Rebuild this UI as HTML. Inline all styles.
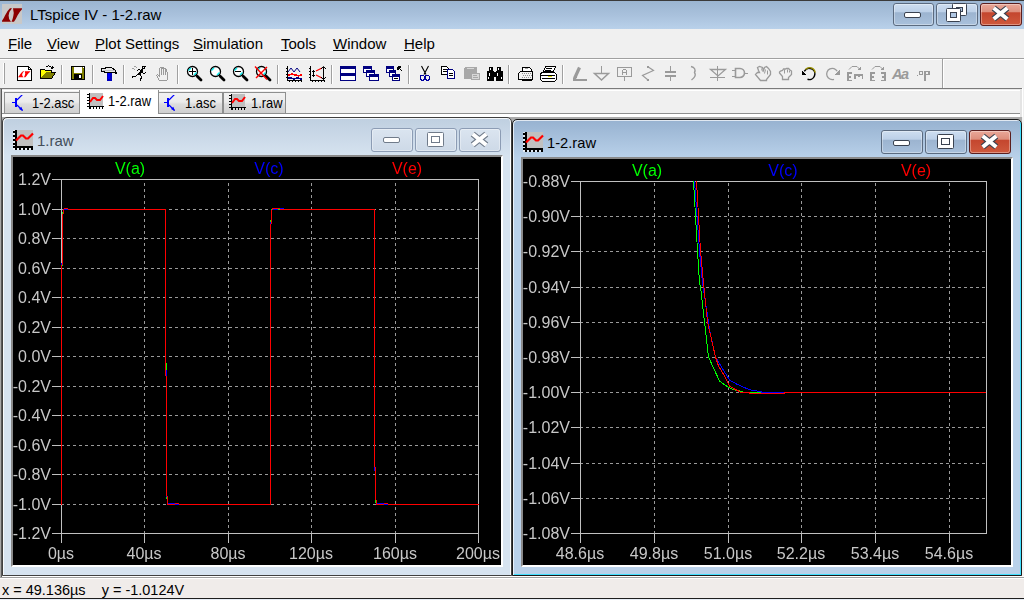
<!DOCTYPE html>
<html><head><meta charset="utf-8">
<style>
*{margin:0;padding:0;box-sizing:border-box}
html,body{width:1024px;height:600px;overflow:hidden;background:#f0f0f0;font-family:"Liberation Sans",sans-serif;position:relative}
.abs{position:absolute}
#title{left:0;top:0;width:1024px;height:29px;background:linear-gradient(#9bb5d1,#a9c1dc 50%,#b9d1ea);border-top:1px solid #3a3a3a}
#title .t{left:30px;top:5px;font-size:15px;color:#000;white-space:nowrap}
#menu{left:0;top:29px;width:1024px;height:29px;background:#f0f0f0}
#menu span{position:absolute;top:6px;font-size:15px;color:#000;white-space:nowrap}
#menu u{text-decoration:underline;text-decoration-thickness:1px;text-underline-offset:1px}
#tabs{left:0;top:90px;width:1024px;height:27px;background:#f0f0f0}
.tab{position:absolute;top:2px;height:22px;border:1px solid #8e8f8f;background:linear-gradient(#f3f3f3,#ebebeb 45%,#dcdcdc 55%,#cfcfcf);font-size:15px;white-space:nowrap}
.tab.sel{top:-1px;height:25px;background:#fff;border:none}
.tt{font-size:15px;white-space:nowrap;transform:scaleX(0.86);transform-origin:0 0}
.xx{position:absolute;top:2px;transform:scaleX(0.86);transform-origin:0 0}
#mdi{left:0;top:117px;width:1024px;height:460px;background:#ababab;border-left:1px solid #a8a8a8;box-shadow:inset 1px 0 0 #5a5a5a, inset 0 -1px 0 #fff, inset -2px 0 0 #f4f4f4}
#status{left:0;top:577px;width:1024px;height:23px;background:#f0ecea;border-top:1px solid #a0a0a0;box-shadow:inset 0 1px 0 #fff;border-bottom:1px solid #e8eef6}
#status:after{content:"";position:absolute;left:0;top:20px;width:1024px;height:1px;background:#1e1e1e}
#status .t{left:2px;top:3px;font-size:15px;white-space:nowrap;transform:scaleX(0.965);transform-origin:0 0}
.win{border:1px solid #404040;border-radius:5px 5px 0 0}
.win.l{background:linear-gradient(#bfcfe0 0,#d6e3f0 38px,#d6e3f0);box-shadow:inset 1px 1px 0 rgba(255,255,255,0.8),inset -1px 0 0 rgba(255,255,255,0.9)}
.win.r{background:linear-gradient(#97b2d0 0,#b9d1ea 38px,#b9d1ea);border-color:#1a1a1a;box-shadow:inset 1px 1px 0 rgba(255,255,255,0.7),inset -1px -1px 0 #40e0ff}
.pb{border-top:2px solid #8a8a8a;border-left:2px solid #8a8a8a;border-right:2px solid #fff;border-bottom:2px solid #fff}
.ct{font-size:15px;white-space:nowrap}
svg text{font-family:"Liberation Sans",sans-serif}
</style></head><body>
<div id="title" class="abs">
  <div class="abs" style="left:2px;top:3px;width:20px;height:20px;background:#c8c8c8"></div>
  <svg class="abs" style="left:0;top:0" width="26" height="26"><path d="M10 7.3H12Q9 10.5 8.6 14.5Q8.4 18 11 20.7H2V19.8Q3.8 17.5 5 14.5Q7 10 10 7.3Z M13 7.3H22V8.3Q19.5 11 17.5 14.5Q16 18 14 20.7H11.5Q12.8 18 13.3 15Q14.2 11.5 13.3 9.2Z" fill="#8b0000"/></svg>
  <div class="t abs">LTspice IV - 1-2.raw</div>
</div>
<svg class="abs" style="left:880px;top:0" width="144" height="30" viewBox="880 0 144 30"><defs>
<linearGradient id="gAct" x1="0" y1="0" x2="0" y2="1"><stop offset="0" stop-color="#cfdff1"/><stop offset="0.38" stop-color="#bcd0e8"/><stop offset="0.42" stop-color="#9cb4d0"/><stop offset="1" stop-color="#a9c1dc"/></linearGradient>
<linearGradient id="gClose" x1="0" y1="0" x2="0" y2="1"><stop offset="0" stop-color="#eaa99a"/><stop offset="0.38" stop-color="#dd8e7c"/><stop offset="0.42" stop-color="#c4462e"/><stop offset="1" stop-color="#cf5a3e"/></linearGradient>
<linearGradient id="gInact" x1="0" y1="0" x2="0" y2="1"><stop offset="0" stop-color="#dbe5f0"/><stop offset="1" stop-color="#cdd9e7"/></linearGradient>
</defs>
<rect x="893.5" y="3.5" width="40" height="22" rx="2.5" fill="url(#gAct)" stroke="#5b6b80"/><rect x="894.5" y="4.5" width="38" height="20" rx="2" fill="none" stroke="rgba(255,255,255,0.35)"/>
<rect x="904.5" y="12.5" width="16" height="5" rx="1.5" fill="#fff" stroke="#3a4250" stroke-width="1"/>
<rect x="936.5" y="3.5" width="41" height="22" rx="2.5" fill="url(#gAct)" stroke="#5b6b80"/><rect x="937.5" y="4.5" width="39" height="20" rx="2" fill="none" stroke="rgba(255,255,255,0.35)"/>
<rect x="952.5" y="3.5" width="14" height="12" rx="1" fill="#fff" stroke="#3a4250"/><rect x="956.5" y="7.5" width="6" height="4" fill="#b0c8e4" stroke="#3a4250"/><rect x="946.5" y="8.5" width="14" height="13" rx="1" fill="#fff" stroke="#3a4250"/><rect x="950.5" y="12.5" width="6" height="5" fill="#b0c8e4" stroke="#3a4250"/>
<rect x="980.5" y="3.5" width="41" height="22" rx="2.5" fill="url(#gClose)" stroke="#5a1e1e"/><rect x="981.5" y="4.5" width="39" height="20" rx="2" fill="none" stroke="rgba(255,255,255,0.35)"/>
<path d="M993.7 8.059999999999999L1007.3 18.94M1007.3 8.059999999999999L993.7 18.94" stroke="#3a4250" stroke-width="6.2" fill="none" stroke-linecap="butt"/><path d="M993.7 8.059999999999999L1007.3 18.94M1007.3 8.059999999999999L993.7 18.94" stroke="#fff" stroke-width="4" fill="none" stroke-linecap="butt"/>
</svg>
<div id="menu" class="abs">
  <span style="left:8px"><u>F</u>ile</span>
  <span style="left:47px"><u>V</u>iew</span>
  <span style="left:95px"><u>P</u>lot Settings</span>
  <span style="left:193px"><u>S</u>imulation</span>
  <span style="left:281px"><u>T</u>ools</span>
  <span style="left:333px"><u>W</u>indow</span>
  <span style="left:404px"><u>H</u>elp</span>
</div>
<svg class="abs" style="left:0;top:58px" width="1024" height="32" viewBox="0 58 1024 32" shape-rendering="crispEdges">
<rect x="0" y="58" width="1024" height="1" fill="#a0a0a0"/>
<rect x="0" y="59" width="1024" height="1" fill="#ffffff"/>
<rect x="0" y="88" width="1024" height="1" fill="#a0a0a0"/>
<rect x="0" y="89" width="1024" height="1" fill="#ffffff"/>
<rect x="942" y="59" width="1" height="29" fill="#a0a0a0"/>
<rect x="943" y="59" width="1" height="29" fill="#ffffff"/>
<rect x="3" y="63" width="1" height="21" fill="#ffffff"/>
<rect x="4" y="63" width="1" height="21" fill="#a0a0a0"/>
<rect x="61" y="65" width="1" height="19" fill="#a0a0a0"/><rect x="62" y="65" width="1" height="19" fill="#ffffff"/>
<rect x="92" y="65" width="1" height="19" fill="#a0a0a0"/><rect x="93" y="65" width="1" height="19" fill="#ffffff"/>
<rect x="123" y="65" width="1" height="19" fill="#a0a0a0"/><rect x="124" y="65" width="1" height="19" fill="#ffffff"/>
<rect x="177" y="65" width="1" height="19" fill="#a0a0a0"/><rect x="178" y="65" width="1" height="19" fill="#ffffff"/>
<rect x="277" y="65" width="1" height="19" fill="#a0a0a0"/><rect x="278" y="65" width="1" height="19" fill="#ffffff"/>
<rect x="331" y="65" width="1" height="19" fill="#a0a0a0"/><rect x="332" y="65" width="1" height="19" fill="#ffffff"/>
<rect x="408" y="65" width="1" height="19" fill="#a0a0a0"/><rect x="409" y="65" width="1" height="19" fill="#ffffff"/>
<rect x="508" y="65" width="1" height="19" fill="#a0a0a0"/><rect x="509" y="65" width="1" height="19" fill="#ffffff"/>
<rect x="562" y="65" width="1" height="19" fill="#a0a0a0"/><rect x="563" y="65" width="1" height="19" fill="#ffffff"/>
<path d="M17.5 66.5H28.5L31.5 69.5V80.5H17.5Z" fill="#fff" stroke="#000" stroke-width="1"/>
<path d="M28.5 66.5V69.5H31.5" fill="none" stroke="#000" stroke-width="1"/>
<path transform="translate(17,68) scale(0.6,0.45)" d="M10 7.3H12Q9 10.5 8.6 14.5Q8.4 18 11 20.7H2V19.8Q3.8 17.5 5 14.5Q7 10 10 7.3Z M13 7.3H22V8.3Q19.5 11 17.5 14.5Q16 18 14 20.7H11.5Q12.8 18 13.3 15Q14.2 11.5 13.3 9.2Z" fill="#ff0000" shape-rendering="auto"/>
<path d="M40.5 69.5H44.5L45.5 70.5H51.5V72.5H55.5L51.5 78.5H40.5Z" fill="#808000" stroke="#000" stroke-width="1"/>
<path d="M41 70H44L45 71H51V72H46L41 78Z" fill="#ffff00"/>
<path d="M46 66.5Q49 65 52 67.5" fill="None" stroke="#000" stroke-width="1"/>
<path d="M52 66L54 68L51 69Z" fill="#000"/>
<rect x="71" y="66" width="14" height="14" fill="#000"/>
<rect x="72" y="67" width="12" height="12" fill="#808000"/>
<rect x="74" y="67" width="8" height="6" fill="#fff"/>
<rect x="73" y="73" width="10" height="1" fill="#808000"/>
<rect x="74" y="74" width="8" height="5" fill="#000"/>
<rect x="79" y="75" width="2" height="3" fill="#fff"/>
<rect x="83" y="67" width="1" height="1" fill="#fff"/>
<path d="M101.5 68.5H104.5L106.5 67.5H111.5L115.5 70.5L116.5 73.5L114.5 72.5H105.5L103.5 71.5H101.5Z" fill="#e8e8e8" stroke="#000" stroke-width="1"/>
<rect x="103" y="70" width="12" height="1" fill="#c0c0c0"/>
<rect x="107" y="73" width="5" height="8" fill="#0000c0"/>
<rect x="108" y="73" width="2" height="6" fill="#0000ff"/>
<rect x="142" y="66" width="1" height="1" fill="#000"/>
<rect x="143" y="66" width="1" height="1" fill="#000"/>
<rect x="144" y="66" width="1" height="1" fill="#000"/>
<rect x="145" y="66" width="1" height="1" fill="#000"/>
<rect x="142" y="67" width="1" height="1" fill="#000"/>
<rect x="144" y="67" width="1" height="1" fill="#000"/>
<rect x="142" y="68" width="1" height="1" fill="#000"/>
<rect x="143" y="68" width="1" height="1" fill="#000"/>
<rect x="144" y="68" width="1" height="1" fill="#000"/>
<rect x="138" y="69" width="1" height="1" fill="#000"/>
<rect x="139" y="69" width="1" height="1" fill="#000"/>
<rect x="141" y="69" width="1" height="1" fill="#000"/>
<rect x="142" y="69" width="1" height="1" fill="#000"/>
<rect x="137" y="70" width="1" height="1" fill="#000"/>
<rect x="140" y="70" width="1" height="1" fill="#000"/>
<rect x="141" y="70" width="1" height="1" fill="#000"/>
<rect x="142" y="70" width="1" height="1" fill="#000"/>
<rect x="140" y="71" width="1" height="1" fill="#000"/>
<rect x="141" y="71" width="1" height="1" fill="#000"/>
<rect x="142" y="71" width="1" height="1" fill="#000"/>
<rect x="139" y="72" width="1" height="1" fill="#000"/>
<rect x="140" y="72" width="1" height="1" fill="#000"/>
<rect x="141" y="72" width="1" height="1" fill="#000"/>
<rect x="142" y="72" width="1" height="1" fill="#000"/>
<rect x="145" y="72" width="1" height="1" fill="#000"/>
<rect x="138" y="73" width="1" height="1" fill="#000"/>
<rect x="139" y="73" width="1" height="1" fill="#000"/>
<rect x="140" y="73" width="1" height="1" fill="#000"/>
<rect x="143" y="73" width="1" height="1" fill="#000"/>
<rect x="144" y="73" width="1" height="1" fill="#000"/>
<rect x="137" y="74" width="1" height="1" fill="#000"/>
<rect x="138" y="74" width="1" height="1" fill="#000"/>
<rect x="139" y="74" width="1" height="1" fill="#000"/>
<rect x="140" y="74" width="1" height="1" fill="#000"/>
<rect x="136" y="75" width="1" height="1" fill="#000"/>
<rect x="140" y="75" width="1" height="1" fill="#000"/>
<rect x="132" y="76" width="1" height="1" fill="#000"/>
<rect x="133" y="76" width="1" height="1" fill="#000"/>
<rect x="134" y="76" width="1" height="1" fill="#000"/>
<rect x="135" y="76" width="1" height="1" fill="#000"/>
<rect x="141" y="76" width="1" height="1" fill="#000"/>
<rect x="132" y="77" width="1" height="1" fill="#000"/>
<rect x="141" y="77" width="1" height="1" fill="#000"/>
<rect x="140" y="78" width="1" height="1" fill="#000"/>
<rect x="141" y="78" width="1" height="1" fill="#000"/>
<rect x="140" y="79" width="1" height="1" fill="#000"/>
<rect x="140" y="80" width="1" height="1" fill="#000"/>
<rect x="134" y="66" width="1" height="1" fill="#a0a0a0"/>
<rect x="135" y="66" width="1" height="1" fill="#a0a0a0"/>
<rect x="136" y="67" width="1" height="1" fill="#a0a0a0"/>
<rect x="132" y="68" width="1" height="1" fill="#a0a0a0"/>
<rect x="133" y="68" width="1" height="1" fill="#a0a0a0"/>
<rect x="134" y="69" width="1" height="1" fill="#a0a0a0"/>
<path d="M159.5 80.5L156.5 75.5L157.5 74.5L159.5 76.5V68.5L160.5 67.5L162.5 68.5V67.5L164.5 68.5L166.5 69.5V71.5L167.5 72.5V79.5L166.5 80.5Z" fill="none" stroke="#9a9a9a" stroke-width="1"/>
<rect x="161" y="69" width="1" height="6" fill="#9a9a9a"/>
<rect x="163" y="69" width="1" height="6" fill="#9a9a9a"/>
<rect x="165" y="70" width="1" height="5" fill="#9a9a9a"/>
<circle cx="192.5" cy="71.5" r="5" fill="#fff" stroke="#000" stroke-width="1.3" shape-rendering="auto"/><path d="M188.5 70.5L191.0 68.0M196.5 72.5L194.0 75.0" stroke="#00f0f0" stroke-width="1.3" shape-rendering="auto"/><path d="M197.2 76.2L201.0 80.0" stroke="#000" stroke-width="2.8" stroke-linecap="round" shape-rendering="auto"/>
<rect x="189" y="71" width="7" height="1" fill="#000"/>
<rect x="192" y="68" width="1" height="7" fill="#000"/>
<circle cx="215.5" cy="71.5" r="5" fill="#fff" stroke="#000" stroke-width="1.3" shape-rendering="auto"/><path d="M211.5 70.5L214.0 68.0M219.5 72.5L217.0 75.0" stroke="#00f0f0" stroke-width="1.3" shape-rendering="auto"/><path d="M220.2 76.2L224.0 80.0" stroke="#000" stroke-width="2.8" stroke-linecap="round" shape-rendering="auto"/>
<circle cx="238.5" cy="71.5" r="5" fill="#fff" stroke="#000" stroke-width="1.3" shape-rendering="auto"/><path d="M234.5 70.5L237.0 68.0M242.5 72.5L240.0 75.0" stroke="#00f0f0" stroke-width="1.3" shape-rendering="auto"/><path d="M243.2 76.2L247.0 80.0" stroke="#000" stroke-width="2.8" stroke-linecap="round" shape-rendering="auto"/>
<rect x="235" y="71" width="6" height="1.3" fill="#000"/>
<circle cx="261.5" cy="71.5" r="5" fill="#fff" stroke="#000" stroke-width="1.3" shape-rendering="auto"/><path d="M257.5 70.5L260.0 68.0M265.5 72.5L263.0 75.0" stroke="#00f0f0" stroke-width="1.3" shape-rendering="auto"/><path d="M266.2 76.2L270.0 80.0" stroke="#000" stroke-width="2.8" stroke-linecap="round" shape-rendering="auto"/>
<path d="M255 66.5L267 79.5M256 78L267 67" fill="None" stroke="#ff0000" stroke-width="1.4" shape-rendering="auto"/>
<rect x="287" y="66" width="1" height="15" fill="#000"/><rect x="287" y="80" width="15" height="1" fill="#000"/><rect x="286" y="68" width="1" height="1" fill="#000"/><rect x="286" y="71" width="1" height="1" fill="#000"/><rect x="286" y="74" width="1" height="1" fill="#000"/><rect x="286" y="77" width="1" height="1" fill="#000"/><rect x="289" y="81" width="1" height="1" fill="#000"/><rect x="292" y="81" width="1" height="1" fill="#000"/><rect x="295" y="81" width="1" height="1" fill="#000"/><rect x="298" y="81" width="1" height="1" fill="#000"/><rect x="301" y="81" width="1" height="1" fill="#000"/>
<path d="M288 72L291 68L294 72L297 68L300 72" fill="None" stroke="#000080" stroke-width="1" shape-rendering="auto"/>
<path d="M288 75H290L291 74H293L294 75H297L298 76H299L300 75H302" fill="None" stroke="#ff0000" stroke-width="1.2"/>
<path d="M288 78H292L293 79H295L296 78H299L300 79H302" fill="None" stroke="#000080" stroke-width="1.4"/>
<rect x="310" y="66" width="1" height="15" fill="#000"/><rect x="310" y="80" width="15" height="1" fill="#000"/><rect x="309" y="68" width="1" height="1" fill="#000"/><rect x="309" y="71" width="1" height="1" fill="#000"/><rect x="309" y="74" width="1" height="1" fill="#000"/><rect x="309" y="77" width="1" height="1" fill="#000"/><rect x="312" y="81" width="1" height="1" fill="#000"/><rect x="315" y="81" width="1" height="1" fill="#000"/><rect x="318" y="81" width="1" height="1" fill="#000"/><rect x="321" y="81" width="1" height="1" fill="#000"/><rect x="324" y="81" width="1" height="1" fill="#000"/>
<path d="M316 71L322 68M316 75L322 78" fill="None" stroke="#ff0000" stroke-width="1.2" shape-rendering="auto"/>
<rect x="323" y="67" width="1" height="13" fill="#000"/>
<path d="M321 69L323.5 66.5L326 69M321 77L323.5 79.5L326 77" fill="None" stroke="#000" stroke-width="1" shape-rendering="auto"/>
<rect x="313" y="71" width="1" height="5" fill="#000"/>
<path d="M312 72L313.5 70.5L315 72M312 75L313.5 76.5L315 75" fill="None" stroke="#000" stroke-width="1"/>
<rect x="340" y="66" width="16" height="8" fill="#000080"/><rect x="341" y="69" width="14" height="4" fill="#fff"/>
<rect x="340" y="73" width="16" height="8" fill="#000080"/><rect x="341" y="76" width="14" height="4" fill="#fff"/>
<rect x="363" y="66" width="9" height="7" fill="#000080"/><rect x="364" y="69" width="7" height="3" fill="#fff"/>
<rect x="366" y="70" width="9" height="7" fill="#000080"/><rect x="367" y="73" width="7" height="3" fill="#fff"/>
<rect x="369" y="74" width="10" height="7" fill="#000080"/><rect x="370" y="77" width="8" height="3" fill="#fff"/>
<rect x="386" y="66" width="8" height="7" fill="#000080"/><rect x="387" y="69" width="6" height="3" fill="#fff"/>
<rect x="389" y="70" width="7" height="7" fill="#000080"/><rect x="390" y="73" width="5" height="3" fill="#fff"/>
<rect x="392" y="74" width="8" height="7" fill="#000080"/><rect x="393" y="77" width="6" height="3" fill="#fff"/>
<rect x="394" y="78" width="4" height="1" fill="#000"/>
<path d="M398 67L402 71M398 67V70M398 67H401" fill="None" stroke="#000" stroke-width="1.3"/>
<path d="M421.5 66L426 74.5M428.5 66L424 74.5" fill="None" stroke="#000" stroke-width="1.1" shape-rendering="auto"/>
<ellipse cx="422.5" cy="77.8" rx="2" ry="2.6" fill="none" stroke="#0000a0" stroke-width="1.2"/>
<ellipse cx="427.5" cy="77.8" rx="2" ry="2.6" fill="none" stroke="#0000a0" stroke-width="1.2"/>
<path d="M441.5 66.5H446.5L448.5 68.5V74.5H441.5Z" fill="#fff" stroke="#000" stroke-width="1"/>
<path d="M447.5 69.5H452.5L454.5 71.5V78.5H447.5Z" fill="#fff" stroke="#000080" stroke-width="1"/>
<rect x="443" y="69" width="4" height="1" fill="#000"/>
<rect x="443" y="71" width="4" height="1" fill="#000"/>
<rect x="449" y="73" width="4" height="1" fill="#000"/>
<rect x="449" y="75" width="4" height="1" fill="#000"/>
<rect x="464" y="67" width="13" height="12" rx="2" fill="#a8a8a8"/>
<rect x="467" y="68" width="7" height="1" fill="#d8d8d8"/>
<rect x="471" y="73" width="9" height="7" fill="#a8a8a8"/>
<rect x="472" y="74" width="7" height="5" fill="#d8d8d8"/>
<rect x="473" y="75" width="4" height="1" fill="#a8a8a8"/>
<rect x="473" y="77" width="5" height="1" fill="#a8a8a8"/>
<rect x="489" y="67" width="4" height="4" fill="#000"/>
<rect x="497" y="67" width="4" height="4" fill="#000"/>
<rect x="487" y="71" width="7" height="10" fill="#000"/>
<rect x="496" y="71" width="7" height="10" fill="#000"/>
<rect x="493" y="72" width="4" height="5" fill="#000"/>
<rect x="490" y="68" width="1" height="2" fill="#fff"/>
<rect x="498" y="68" width="1" height="2" fill="#fff"/>
<rect x="489" y="73" width="1" height="3" fill="#fff"/>
<rect x="497" y="73" width="1" height="3" fill="#fff"/>
<rect x="488" y="77" width="1" height="2" fill="#fff"/>
<rect x="501" y="77" width="1" height="2" fill="#fff"/>
<path d="M522.5 67.5H529.5L531.5 69.5V71.5H522.5Z" fill="#fff" stroke="#000" stroke-width="1"/>
<rect x="525" y="68" width="3" height="1" fill="#a0a0a0"/>
<path d="M520.5 71.5H532.5V79.5H518.5V73.5Z" fill="#f4f4f4" stroke="#000" stroke-width="1"/>
<rect x="522" y="80" width="10" height="1" fill="#000"/>
<rect x="522" y="73" width="1" height="1" fill="#909090"/>
<rect x="523" y="75" width="1" height="1" fill="#909090"/>
<rect x="522" y="77" width="1" height="1" fill="#909090"/>
<rect x="524" y="73" width="1" height="1" fill="#909090"/>
<rect x="525" y="75" width="1" height="1" fill="#909090"/>
<rect x="524" y="77" width="1" height="1" fill="#909090"/>
<rect x="526" y="73" width="1" height="1" fill="#909090"/>
<rect x="527" y="75" width="1" height="1" fill="#909090"/>
<rect x="526" y="77" width="1" height="1" fill="#909090"/>
<rect x="528" y="73" width="1" height="1" fill="#909090"/>
<rect x="529" y="75" width="1" height="1" fill="#909090"/>
<rect x="528" y="77" width="1" height="1" fill="#909090"/>
<rect x="530" y="73" width="1" height="1" fill="#909090"/>
<rect x="531" y="75" width="1" height="1" fill="#909090"/>
<rect x="530" y="77" width="1" height="1" fill="#909090"/>
<path d="M545.5 66.5H555.5L553.5 71.5H543.5Z" fill="#fff" stroke="#000" stroke-width="1"/>
<rect x="546" y="68" width="6" height="1" fill="#000"/>
<rect x="545" y="70" width="6" height="1" fill="#000"/>
<path d="M541.5 72.5H554.5L556.5 74.5V79.5L554.5 81.5H542.5L540.5 79.5V74.5Z" fill="#fff" stroke="#000" stroke-width="1"/>
<rect x="541" y="75" width="14" height="1" fill="#000"/>
<rect x="542" y="78" width="13" height="1" fill="#000"/>
<rect x="548" y="76" width="4" height="1" fill="#e0e000"/>
<path d="M574.5 78.5L579.5 67.5" fill="None" stroke="#9a9a9a" stroke-width="3.2" shape-rendering="auto"/>
<rect x="573" y="79" width="14" height="1.5" fill="#9a9a9a"/>
<path d="M573 79.5L575 75L577 78Z" fill="#9a9a9a"/>
<rect x="601" y="66" width="1.2" height="7" fill="#9a9a9a"/>
<path d="M594.5 73.5H608.5L601.5 80Z" fill="none" stroke="#9a9a9a" stroke-width="1.5" shape-rendering="auto"/>
<rect x="617.5" y="67.5" width="14" height="9" rx="1.5" fill="none" stroke="#9a9a9a" stroke-width="1.6"/>
<rect x="624" y="77" width="1.2" height="4" fill="#9a9a9a"/>
<path d="M622.5 74.5V70.5L623.5 69.5H625.5L626.5 70.5V74.5M622.5 72.5H626.5" fill="None" stroke="#9a9a9a" stroke-width="1.4"/>
<path d="M647.5 66.5L653.5 70.5L642.5 75.5L647.5 79.5V81" fill="None" stroke="#9a9a9a" stroke-width="1.2" shape-rendering="auto"/>
<rect x="647" y="66" width="1.5" height="1.5" fill="#9a9a9a"/>
<rect x="647" y="79" width="1.5" height="2" fill="#9a9a9a"/>
<rect x="670" y="66" width="1.2" height="5" fill="#9a9a9a"/>
<rect x="665" y="71" width="11" height="1.8" fill="#9a9a9a"/>
<rect x="665" y="75" width="11" height="1.8" fill="#9a9a9a"/>
<rect x="670" y="77" width="1.2" height="4" fill="#9a9a9a"/>
<path d="M691 66.5Q696.5 68 694.5 72.5Q697 76 691.5 80" fill="None" stroke="#9a9a9a" stroke-width="1.4" shape-rendering="auto"/>
<rect x="717" y="66" width="1" height="15" fill="#9a9a9a"/>
<path d="M710.5 69.5H725.5L718 76Z" fill="none" stroke="#9a9a9a" stroke-width="1.3" shape-rendering="auto"/>
<rect x="710" y="77" width="15" height="1" fill="#9a9a9a"/>
<path d="M735.5 68.5H740A4.5 4.5 0 0 1 740 77.5H735.5Z" fill="none" stroke="#9a9a9a" stroke-width="1.6" shape-rendering="auto"/>
<rect x="732" y="70" width="4" height="1" fill="#9a9a9a"/>
<rect x="732" y="76" width="4" height="1" fill="#9a9a9a"/>
<rect x="745" y="73" width="3" height="1" fill="#9a9a9a"/>
<path d="M760.5 80.5H766.5V79.5L770.5 74.5V71.5L768.5 68.5L766.5 66.5L764.5 67.5L763.5 70.5L762.5 67.5L759.5 66.5L757.5 67.5L758.5 70.5L759.5 72.5L757.5 72.5L755.5 74.5Z" fill="none" stroke="#9a9a9a" stroke-width="1.3" shape-rendering="auto"/>
<path d="M761.5 68.5L762.5 71.5M765.5 69.5L764.5 73.5M767.5 70.5L767.5 74.5" fill="None" stroke="#9a9a9a" stroke-width="1" shape-rendering="auto"/>
<path d="M782.5 79.5H788.5V77.5L791.5 74.5V71L790 70L788.5 68.5H786.5L785.5 69H783.5L782.5 70.5L780.5 71L779.5 72V73L782.5 76.5Z" fill="none" stroke="#9a9a9a" stroke-width="1.3" shape-rendering="auto"/>
<path d="M784.5 69.5V73.5M787.5 69.5V72.5M789.5 70.5V72.5" fill="None" stroke="#9a9a9a" stroke-width="1" shape-rendering="auto"/>
<path d="M804.3 71.3A5.6 5.6 0 1 1 807.5 79.3" fill="None" stroke="#000" stroke-width="1.5" shape-rendering="auto"/>
<path d="M805.5 69.5A5.6 5.6 0 0 1 815.2 72.6" fill="None" stroke="#9a9000" stroke-width="1.3" shape-rendering="auto"/>
<path d="M802 70V75H806.5Z" fill="#000"/>
<path d="M837.2 71.3A5.6 5.6 0 1 0 834 79.3" fill="None" stroke="#9a9a9a" stroke-width="1.3" shape-rendering="auto"/>
<path d="M839.5 70V75H835Z" fill="#9a9a9a"/>
<rect x="847" y="72" width="2" height="9" fill="#9a9a9a"/>
<rect x="847" y="72" width="5" height="1.5" fill="#9a9a9a"/>
<rect x="847" y="76" width="4" height="1.5" fill="#9a9a9a"/>
<rect x="847" y="79.5" width="5" height="1.5" fill="#9a9a9a"/>
<rect x="854" y="74" width="9" height="2" fill="#9a9a9a"/>
<rect x="854" y="74" width="1.5" height="5" fill="#9a9a9a"/>
<rect x="858" y="74" width="1.5" height="3" fill="#9a9a9a"/>
<rect x="861.5" y="74" width="1.5" height="5" fill="#9a9a9a"/>
<path d="M849 69.5L852 66.5H857L859.5 69" fill="None" stroke="#9a9a9a" stroke-width="1" shape-rendering="auto"/>
<path d="M860.5 67V70H857.5Z" fill="#9a9a9a"/>
<rect x="870" y="72" width="2" height="9" fill="#9a9a9a"/>
<rect x="870" y="72" width="5" height="1.5" fill="#9a9a9a"/>
<rect x="870" y="76" width="4" height="1.5" fill="#9a9a9a"/>
<rect x="870" y="79.5" width="5" height="1.5" fill="#9a9a9a"/>
<rect x="884" y="72" width="2" height="9" fill="#9a9a9a"/>
<rect x="881" y="72" width="4" height="1.5" fill="#9a9a9a"/>
<rect x="882" y="76" width="3" height="1.5" fill="#9a9a9a"/>
<rect x="881" y="79.5" width="4" height="1.5" fill="#9a9a9a"/>
<path d="M872 69.5L875 66.5H880L882.5 69" fill="None" stroke="#9a9a9a" stroke-width="1" shape-rendering="auto"/>
<path d="M883.5 67V70H880.5Z" fill="#9a9a9a"/>
<text x="892" y="79" font-family="Liberation Serif" font-style="italic" font-weight="bold" font-size="14.5" fill="#9a9a9a" letter-spacing="-1.5">Aa</text>
<rect x="917" y="75" width="1" height="1" fill="#9a9a9a"/>
<path d="M919.5 71.5H922.5V74.5H919.5Z" fill="none" stroke="#9a9a9a" stroke-width="1.5"/>
<path d="M925 80.5V71.5H929V74.5H925.5" fill="None" stroke="#9a9a9a" stroke-width="1.5"/>
</svg>
<svg class="abs" style="left:0;top:88px" width="1024" height="29" viewBox="0 88 1024 29" shape-rendering="crispEdges">
<defs><linearGradient id="gTab" x1="0" y1="0" x2="0" y2="1"><stop offset="0" stop-color="#f2f2f2"/><stop offset="0.45" stop-color="#ebebeb"/><stop offset="0.55" stop-color="#dddddd"/><stop offset="1" stop-color="#cfcfcf"/></linearGradient></defs>
<rect x="0" y="88" width="1024" height="1" fill="#7a7a7a"/>
<rect x="0" y="89" width="1024" height="1" fill="#e8e8e8"/>
<rect x="0" y="90" width="1024" height="1" fill="#ffffff"/>
<rect x="0" y="113" width="1020" height="1" fill="#8e8f8f"/>
<rect x="0" y="114" width="1020" height="3" fill="#ffffff"/>
<rect x="1020" y="90" width="2" height="27" fill="#e4e4e4"/>
<rect x="1022" y="88" width="1" height="29" fill="#ffffff"/><rect x="1023" y="88" width="1" height="29" fill="#f0f0f0"/>
<rect x="4.5" y="92.5" width="75" height="21" fill="url(#gTab)" stroke="#8e8f8f"/>
<rect x="158.5" y="92.5" width="64" height="21" fill="url(#gTab)" stroke="#8e8f8f"/>
<rect x="223.5" y="92.5" width="62" height="21" fill="url(#gTab)" stroke="#8e8f8f"/>
<rect x="80" y="90" width="78" height="27" fill="#ffffff"/>
<rect x="79" y="90" width="1" height="24" fill="#8e8f8f"/><rect x="158" y="90" width="1" height="24" fill="#8e8f8f"/>
<rect x="0" y="89" width="1" height="28" fill="#a8a8a8"/><rect x="1" y="89" width="1" height="28" fill="#5a5a5a"/>
</svg>
<svg class="abs" style="left:12px;top:95px" width="13" height="17" viewBox="0 0 13 17" shape-rendering="crispEdges"><rect x="0" y="6.5" width="4" height="1.2" fill="#0000ff"/><rect x="3" y="3" width="2.2" height="9" fill="#0000ff"/><path d="M5 5L10.5 -0.5M5 10L10.5 15.5" stroke="#0000ff" stroke-width="1.2" fill="none" shape-rendering="auto"/><path d="M7 14L11 16L9.3 11.8Z" fill="#0000ff" shape-rendering="auto"/></svg>
<svg class="abs" style="left:87px;top:93px" width="17" height="16" viewBox="0 0 17 16" shape-rendering="crispEdges"><rect x="3" y="0" width="13" height="13" fill="#c0c0c0"/><rect x="2" y="0" width="1" height="16" fill="#000"/><rect x="2" y="13" width="15" height="1" fill="#000"/><rect x="0" y="1" width="2" height="1" fill="#000"/><rect x="0" y="4" width="2" height="1" fill="#000"/><rect x="0" y="7" width="2" height="1" fill="#000"/><rect x="0" y="10" width="2" height="1" fill="#000"/><rect x="0" y="13" width="2" height="1" fill="#000"/><rect x="3" y="14" width="1" height="2" fill="#000"/><rect x="6" y="14" width="1" height="2" fill="#000"/><rect x="9" y="14" width="1" height="2" fill="#000"/><rect x="12" y="14" width="1" height="2" fill="#000"/><rect x="15" y="14" width="1" height="2" fill="#000"/><path d="M3 9L6 5H8L10 7H13L16 3" fill="none" stroke="#ff0000" stroke-width="2" shape-rendering="auto"/></svg>
<svg class="abs" style="left:164px;top:95px" width="13" height="17" viewBox="0 0 13 17" shape-rendering="crispEdges"><rect x="0" y="6.5" width="4" height="1.2" fill="#0000ff"/><rect x="3" y="3" width="2.2" height="9" fill="#0000ff"/><path d="M5 5L10.5 -0.5M5 10L10.5 15.5" stroke="#0000ff" stroke-width="1.2" fill="none" shape-rendering="auto"/><path d="M7 14L11 16L9.3 11.8Z" fill="#0000ff" shape-rendering="auto"/></svg>
<svg class="abs" style="left:229px;top:94px" width="17" height="16" viewBox="0 0 17 16" shape-rendering="crispEdges"><rect x="3" y="0" width="13" height="13" fill="#c0c0c0"/><rect x="2" y="0" width="1" height="16" fill="#000"/><rect x="2" y="13" width="15" height="1" fill="#000"/><rect x="0" y="1" width="2" height="1" fill="#000"/><rect x="0" y="4" width="2" height="1" fill="#000"/><rect x="0" y="7" width="2" height="1" fill="#000"/><rect x="0" y="10" width="2" height="1" fill="#000"/><rect x="0" y="13" width="2" height="1" fill="#000"/><rect x="3" y="14" width="1" height="2" fill="#000"/><rect x="6" y="14" width="1" height="2" fill="#000"/><rect x="9" y="14" width="1" height="2" fill="#000"/><rect x="12" y="14" width="1" height="2" fill="#000"/><rect x="15" y="14" width="1" height="2" fill="#000"/><path d="M3 9L6 5H8L10 7H13L16 3" fill="none" stroke="#ff0000" stroke-width="2" shape-rendering="auto"/></svg>
<div class="abs tt" style="left:32px;top:94px">1-2.asc</div>
<div class="abs tt" style="left:108px;top:92px">1-2.raw</div>
<div class="abs tt" style="left:185px;top:94px">1.asc</div>
<div class="abs tt" style="left:251px;top:94px">1.raw</div>
<div id="mdi" class="abs"></div>
<div class="win l abs" style="left:2px;top:117px;width:510px;height:459px"></div>
<div class="win r abs" style="left:512px;top:119px;width:510px;height:457px"></div>
<svg class="abs" style="left:13px;top:129px" width="21" height="21" viewBox="0 0 21 21" shape-rendering="crispEdges"><rect x="3" y="1" width="17" height="16" fill="#c0c0c0"/><rect x="0" y="1" width="2" height="19" fill="#ffffff" opacity="0.6"/><rect x="0" y="2" width="2" height="1.5" fill="#000"/><rect x="0" y="6" width="2" height="1.5" fill="#000"/><rect x="0" y="10" width="2" height="1.5" fill="#000"/><rect x="0" y="14" width="2" height="1.5" fill="#000"/><rect x="2" y="1" width="1.5" height="20" fill="#000"/><rect x="0" y="17" width="20" height="1.5" fill="#000"/><rect x="0" y="19" width="20" height="2" fill="#ffffff" opacity="0.6"/><rect x="2" y="18.5" width="1.5" height="2" fill="#000"/><rect x="6" y="18.5" width="1.5" height="2" fill="#000"/><rect x="10" y="18.5" width="1.5" height="2" fill="#000"/><rect x="14" y="18.5" width="1.5" height="2" fill="#000"/><rect x="18" y="18.5" width="1.5" height="2" fill="#000"/><path d="M3 11.5L8 6.5H10L13 9.5H15L20 4.5" fill="none" stroke="#ff0000" stroke-width="2.2" shape-rendering="auto"/></svg><svg class="abs" style="left:523px;top:131px" width="21" height="21" viewBox="0 0 21 21" shape-rendering="crispEdges"><rect x="3" y="1" width="17" height="16" fill="#c0c0c0"/><rect x="0" y="1" width="2" height="19" fill="#ffffff" opacity="0.6"/><rect x="0" y="2" width="2" height="1.5" fill="#000"/><rect x="0" y="6" width="2" height="1.5" fill="#000"/><rect x="0" y="10" width="2" height="1.5" fill="#000"/><rect x="0" y="14" width="2" height="1.5" fill="#000"/><rect x="2" y="1" width="1.5" height="20" fill="#000"/><rect x="0" y="17" width="20" height="1.5" fill="#000"/><rect x="0" y="19" width="20" height="2" fill="#ffffff" opacity="0.6"/><rect x="2" y="18.5" width="1.5" height="2" fill="#000"/><rect x="6" y="18.5" width="1.5" height="2" fill="#000"/><rect x="10" y="18.5" width="1.5" height="2" fill="#000"/><rect x="14" y="18.5" width="1.5" height="2" fill="#000"/><rect x="18" y="18.5" width="1.5" height="2" fill="#000"/><path d="M3 11.5L8 6.5H10L13 9.5H15L20 4.5" fill="none" stroke="#ff0000" stroke-width="2.2" shape-rendering="auto"/></svg><svg class="abs" style="left:371px;top:128px" width="132" height="25" viewBox="371 128 132 25"><defs>
<linearGradient id="gAct" x1="0" y1="0" x2="0" y2="1"><stop offset="0" stop-color="#cfdff1"/><stop offset="0.38" stop-color="#bcd0e8"/><stop offset="0.42" stop-color="#9cb4d0"/><stop offset="1" stop-color="#a9c1dc"/></linearGradient>
<linearGradient id="gClose" x1="0" y1="0" x2="0" y2="1"><stop offset="0" stop-color="#eaa99a"/><stop offset="0.38" stop-color="#dd8e7c"/><stop offset="0.42" stop-color="#c4462e"/><stop offset="1" stop-color="#cf5a3e"/></linearGradient>
<linearGradient id="gInact" x1="0" y1="0" x2="0" y2="1"><stop offset="0" stop-color="#dbe5f0"/><stop offset="1" stop-color="#cdd9e7"/></linearGradient>
</defs>
<rect x="371.5" y="128.5" width="41" height="23" rx="2.5" fill="url(#gInact)" stroke="#8c9cb4"/><rect x="372.5" y="129.5" width="39" height="21" rx="2" fill="none" stroke="rgba(255,255,255,0.35)"/>
<rect x="383.5" y="137.5" width="16" height="5" rx="1.5" fill="#fff" stroke="#707b8a" stroke-width="1"/>
<rect x="415.5" y="128.5" width="41" height="23" rx="2.5" fill="url(#gInact)" stroke="#8c9cb4"/><rect x="416.5" y="129.5" width="39" height="21" rx="2" fill="none" stroke="rgba(255,255,255,0.35)"/>
<rect x="427.5" y="132.5" width="16" height="14" rx="1" fill="#fff" stroke="#707b8a" stroke-width="1"/><rect x="431.5" y="136.5" width="8" height="6" fill="none" stroke="#707b8a" stroke-width="1"/>
<rect x="459.5" y="128.5" width="41" height="23" rx="2.5" fill="url(#gInact)" stroke="#8c9cb4"/><rect x="460.5" y="129.5" width="39" height="21" rx="2" fill="none" stroke="rgba(255,255,255,0.35)"/>
<path d="M472.7 134.06L486.3 144.94M486.3 134.06L472.7 144.94" stroke="#707b8a" stroke-width="6.2" fill="none" stroke-linecap="butt"/><path d="M472.7 134.06L486.3 144.94M486.3 134.06L472.7 144.94" stroke="#fff" stroke-width="4" fill="none" stroke-linecap="butt"/>
</svg><svg class="abs" style="left:881px;top:130px" width="132" height="25" viewBox="881 130 132 25"><defs>
<linearGradient id="gAct" x1="0" y1="0" x2="0" y2="1"><stop offset="0" stop-color="#cfdff1"/><stop offset="0.38" stop-color="#bcd0e8"/><stop offset="0.42" stop-color="#9cb4d0"/><stop offset="1" stop-color="#a9c1dc"/></linearGradient>
<linearGradient id="gClose" x1="0" y1="0" x2="0" y2="1"><stop offset="0" stop-color="#eaa99a"/><stop offset="0.38" stop-color="#dd8e7c"/><stop offset="0.42" stop-color="#c4462e"/><stop offset="1" stop-color="#cf5a3e"/></linearGradient>
<linearGradient id="gInact" x1="0" y1="0" x2="0" y2="1"><stop offset="0" stop-color="#dbe5f0"/><stop offset="1" stop-color="#cdd9e7"/></linearGradient>
</defs>
<rect x="881.5" y="130.5" width="41" height="23" rx="2.5" fill="url(#gAct)" stroke="#5b6b80"/><rect x="882.5" y="131.5" width="39" height="21" rx="2" fill="none" stroke="rgba(255,255,255,0.35)"/>
<rect x="893.5" y="140.5" width="16" height="5" rx="1.5" fill="#fff" stroke="#3a4250" stroke-width="1"/>
<rect x="925.5" y="130.5" width="41" height="23" rx="2.5" fill="url(#gAct)" stroke="#5b6b80"/><rect x="926.5" y="131.5" width="39" height="21" rx="2" fill="none" stroke="rgba(255,255,255,0.35)"/>
<rect x="937.5" y="134.5" width="16" height="14" rx="1" fill="#fff" stroke="#3a4250" stroke-width="1"/><rect x="941.5" y="138.5" width="8" height="6" fill="none" stroke="#3a4250" stroke-width="1"/>
<rect x="969.5" y="130.5" width="41" height="23" rx="2.5" fill="url(#gClose)" stroke="#5a1e1e"/><rect x="970.5" y="131.5" width="39" height="21" rx="2" fill="none" stroke="rgba(255,255,255,0.35)"/>
<path d="M982.7 136.06L996.3 146.94M996.3 136.06L982.7 146.94" stroke="#3a4250" stroke-width="6.2" fill="none" stroke-linecap="butt"/><path d="M982.7 136.06L996.3 146.94M996.3 136.06L982.7 146.94" stroke="#fff" stroke-width="4" fill="none" stroke-linecap="butt"/>
</svg>
<div class="ct abs" style="left:37px;top:132px;color:#434e5a">1.raw</div>
<div class="ct abs" style="left:547px;top:134px;color:#000;transform:scaleX(0.98);transform-origin:0 0">1-2.raw</div>
<div class="pb abs" style="left:11px;top:155px;width:492px;height:412px"></div>
<div class="pb abs" style="left:521px;top:157px;width:492px;height:410px"></div>
<svg class="abs" style="left:13px;top:157px;will-change:transform" width="488" height="408" viewBox="13 157 488 408" shape-rendering="crispEdges">
<rect x="13" y="157" width="488" height="408" fill="#000"/>
<line x1="61" y1="209.5" x2="478" y2="209.5" stroke="#9a9a9a" stroke-width="1" stroke-dasharray="3 3"/>
<line x1="61" y1="238.5" x2="478" y2="238.5" stroke="#9a9a9a" stroke-width="1" stroke-dasharray="3 3"/>
<line x1="61" y1="268.5" x2="478" y2="268.5" stroke="#9a9a9a" stroke-width="1" stroke-dasharray="3 3"/>
<line x1="61" y1="297.5" x2="478" y2="297.5" stroke="#9a9a9a" stroke-width="1" stroke-dasharray="3 3"/>
<line x1="61" y1="327.5" x2="478" y2="327.5" stroke="#9a9a9a" stroke-width="1" stroke-dasharray="3 3"/>
<line x1="61" y1="356.5" x2="478" y2="356.5" stroke="#9a9a9a" stroke-width="1" stroke-dasharray="3 3"/>
<line x1="61" y1="386.5" x2="478" y2="386.5" stroke="#9a9a9a" stroke-width="1" stroke-dasharray="3 3"/>
<line x1="61" y1="415.5" x2="478" y2="415.5" stroke="#9a9a9a" stroke-width="1" stroke-dasharray="3 3"/>
<line x1="61" y1="445.5" x2="478" y2="445.5" stroke="#9a9a9a" stroke-width="1" stroke-dasharray="3 3"/>
<line x1="61" y1="474.5" x2="478" y2="474.5" stroke="#9a9a9a" stroke-width="1" stroke-dasharray="3 3"/>
<line x1="61" y1="504.5" x2="478" y2="504.5" stroke="#9a9a9a" stroke-width="1" stroke-dasharray="3 3"/>
<line x1="144.5" y1="183" x2="144.5" y2="533" stroke="#9a9a9a" stroke-width="1" stroke-dasharray="3 3"/>
<line x1="228.5" y1="183" x2="228.5" y2="533" stroke="#9a9a9a" stroke-width="1" stroke-dasharray="3 3"/>
<line x1="311.5" y1="183" x2="311.5" y2="533" stroke="#9a9a9a" stroke-width="1" stroke-dasharray="3 3"/>
<line x1="395.5" y1="183" x2="395.5" y2="533" stroke="#9a9a9a" stroke-width="1" stroke-dasharray="3 3"/>
<line x1="52" y1="179.5" x2="479" y2="179.5" stroke="#c0c0c0" stroke-width="1"/>
<line x1="52" y1="533.5" x2="479" y2="533.5" stroke="#c0c0c0" stroke-width="1"/>
<line x1="61.5" y1="179" x2="61.5" y2="543" stroke="#c0c0c0" stroke-width="1"/>
<line x1="478.5" y1="179" x2="478.5" y2="534" stroke="#c0c0c0" stroke-width="1"/>
<line x1="52" y1="209.5" x2="61" y2="209.5" stroke="#c0c0c0" stroke-width="1"/>
<line x1="52" y1="238.5" x2="61" y2="238.5" stroke="#c0c0c0" stroke-width="1"/>
<line x1="52" y1="268.5" x2="61" y2="268.5" stroke="#c0c0c0" stroke-width="1"/>
<line x1="52" y1="297.5" x2="61" y2="297.5" stroke="#c0c0c0" stroke-width="1"/>
<line x1="52" y1="327.5" x2="61" y2="327.5" stroke="#c0c0c0" stroke-width="1"/>
<line x1="52" y1="356.5" x2="61" y2="356.5" stroke="#c0c0c0" stroke-width="1"/>
<line x1="52" y1="386.5" x2="61" y2="386.5" stroke="#c0c0c0" stroke-width="1"/>
<line x1="52" y1="415.5" x2="61" y2="415.5" stroke="#c0c0c0" stroke-width="1"/>
<line x1="52" y1="445.5" x2="61" y2="445.5" stroke="#c0c0c0" stroke-width="1"/>
<line x1="52" y1="474.5" x2="61" y2="474.5" stroke="#c0c0c0" stroke-width="1"/>
<line x1="52" y1="504.5" x2="61" y2="504.5" stroke="#c0c0c0" stroke-width="1"/>
<line x1="144.5" y1="533" x2="144.5" y2="543" stroke="#c0c0c0" stroke-width="1"/>
<line x1="228.5" y1="533" x2="228.5" y2="543" stroke="#c0c0c0" stroke-width="1"/>
<line x1="311.5" y1="533" x2="311.5" y2="543" stroke="#c0c0c0" stroke-width="1"/>
<line x1="395.5" y1="533" x2="395.5" y2="543" stroke="#c0c0c0" stroke-width="1"/>
<line x1="478.5" y1="533" x2="478.5" y2="543" stroke="#c0c0c0" stroke-width="1"/>
<text x="51" y="185" text-anchor="end" fill="#c8c8c8" font-size="16">1.2V</text>
<text x="51" y="215" text-anchor="end" fill="#c8c8c8" font-size="16">1.0V</text>
<text x="51" y="244" text-anchor="end" fill="#c8c8c8" font-size="16">0.8V</text>
<text x="51" y="274" text-anchor="end" fill="#c8c8c8" font-size="16">0.6V</text>
<text x="51" y="303" text-anchor="end" fill="#c8c8c8" font-size="16">0.4V</text>
<text x="51" y="333" text-anchor="end" fill="#c8c8c8" font-size="16">0.2V</text>
<text x="51" y="362" text-anchor="end" fill="#c8c8c8" font-size="16">0.0V</text>
<text x="51" y="392" text-anchor="end" fill="#c8c8c8" font-size="16">-0.2V</text>
<text x="51" y="421" text-anchor="end" fill="#c8c8c8" font-size="16">-0.4V</text>
<text x="51" y="451" text-anchor="end" fill="#c8c8c8" font-size="16">-0.6V</text>
<text x="51" y="480" text-anchor="end" fill="#c8c8c8" font-size="16">-0.8V</text>
<text x="51" y="510" text-anchor="end" fill="#c8c8c8" font-size="16">-1.0V</text>
<text x="51" y="539" text-anchor="end" fill="#c8c8c8" font-size="16">-1.2V</text>
<text x="61" y="559" text-anchor="middle" fill="#c8c8c8" font-size="16">0&#181;s</text>
<text x="144" y="559" text-anchor="middle" fill="#c8c8c8" font-size="16">40&#181;s</text>
<text x="228" y="559" text-anchor="middle" fill="#c8c8c8" font-size="16">80&#181;s</text>
<text x="311" y="559" text-anchor="middle" fill="#c8c8c8" font-size="16">120&#181;s</text>
<text x="395" y="559" text-anchor="middle" fill="#c8c8c8" font-size="16">160&#181;s</text>
<text x="478" y="559" text-anchor="middle" fill="#c8c8c8" font-size="16">200&#181;s</text>
<text x="130" y="174" text-anchor="middle" fill="#00ff00" font-size="16">V(a)</text>
<text x="269" y="174" text-anchor="middle" fill="#0000ff" font-size="16">V(c)</text>
<text x="407" y="174" text-anchor="middle" fill="#ff0000" font-size="16">V(e)</text>
<g shape-rendering="crispEdges"><rect x="61" y="265" width="1" height="240" fill="#ff0000"/><rect x="62" y="213" width="1" height="52" fill="#ff0000"/><rect x="63" y="209" width="1" height="5" fill="#ff0000"/><rect x="63" y="209" width="103" height="1" fill="#ff0000"/><rect x="61" y="263" width="1" height="2" fill="#0000ff"/><rect x="62" y="265" width="1" height="1" fill="#00ff00"/><rect x="62" y="212" width="1" height="2" fill="#00ff00"/><rect x="64" y="208" width="4" height="1" fill="#ff0000"/><rect x="64" y="209" width="4" height="1" fill="#0000ff"/><rect x="165" y="209" width="1" height="167" fill="#ff0000"/><rect x="166" y="376" width="1" height="120" fill="#ff0000"/><rect x="167" y="496" width="1" height="8" fill="#ff0000"/><rect x="167" y="504" width="104" height="1" fill="#ff0000"/><rect x="166" y="363" width="1" height="7" fill="#00ff00"/><rect x="166" y="370" width="1" height="6" fill="#0000ff"/><rect x="166" y="496" width="1" height="1" fill="#0000ff"/><rect x="166" y="497" width="1" height="2" fill="#00ff00"/><rect x="168" y="503" width="7" height="1" fill="#0000ff"/><rect x="175" y="503" width="4" height="1" fill="#ff0000"/><rect x="175" y="504" width="4" height="1" fill="#0000ff"/><rect x="270" y="224" width="1" height="281" fill="#ff0000"/><rect x="271" y="209" width="1" height="15" fill="#ff0000"/><rect x="272" y="209" width="103" height="1" fill="#ff0000"/><rect x="270" y="222" width="1" height="2" fill="#0000ff"/><rect x="270" y="220" width="1" height="2" fill="#00ff00"/><rect x="271" y="209" width="1" height="1" fill="#00ff00"/><rect x="272" y="208" width="8" height="1" fill="#ff0000"/><rect x="280" y="208" width="4" height="1" fill="#0000ff"/><rect x="273" y="209" width="5" height="1" fill="#0000ff"/><rect x="278" y="209" width="2" height="1" fill="#00ff00"/><rect x="374" y="209" width="1" height="258" fill="#ff0000"/><rect x="374" y="467" width="1" height="4" fill="#0000ff"/><rect x="375" y="467" width="1" height="34" fill="#ff0000"/><rect x="375" y="500" width="1" height="3" fill="#00ff00"/><rect x="376" y="500" width="1" height="4" fill="#ff0000"/><rect x="376" y="504" width="103" height="1" fill="#ff0000"/><rect x="377" y="503" width="7" height="1" fill="#0000ff"/><rect x="384" y="503" width="4" height="1" fill="#ff0000"/><rect x="384" y="504" width="4" height="1" fill="#0000ff"/></g>
</svg>
<svg class="abs" style="left:523px;top:159px;will-change:transform" width="488" height="406" viewBox="523 159 488 406" shape-rendering="crispEdges">
<rect x="523" y="159" width="488" height="406" fill="#000"/>
<line x1="580" y1="216.5" x2="986" y2="216.5" stroke="#9a9a9a" stroke-width="1" stroke-dasharray="3 3"/>
<line x1="580" y1="251.5" x2="986" y2="251.5" stroke="#9a9a9a" stroke-width="1" stroke-dasharray="3 3"/>
<line x1="580" y1="287.5" x2="986" y2="287.5" stroke="#9a9a9a" stroke-width="1" stroke-dasharray="3 3"/>
<line x1="580" y1="322.5" x2="986" y2="322.5" stroke="#9a9a9a" stroke-width="1" stroke-dasharray="3 3"/>
<line x1="580" y1="357.5" x2="986" y2="357.5" stroke="#9a9a9a" stroke-width="1" stroke-dasharray="3 3"/>
<line x1="580" y1="392.5" x2="986" y2="392.5" stroke="#9a9a9a" stroke-width="1" stroke-dasharray="3 3"/>
<line x1="580" y1="427.5" x2="986" y2="427.5" stroke="#9a9a9a" stroke-width="1" stroke-dasharray="3 3"/>
<line x1="580" y1="463.5" x2="986" y2="463.5" stroke="#9a9a9a" stroke-width="1" stroke-dasharray="3 3"/>
<line x1="580" y1="498.5" x2="986" y2="498.5" stroke="#9a9a9a" stroke-width="1" stroke-dasharray="3 3"/>
<line x1="654.5" y1="183" x2="654.5" y2="533" stroke="#9a9a9a" stroke-width="1" stroke-dasharray="3 3"/>
<line x1="728.5" y1="183" x2="728.5" y2="533" stroke="#9a9a9a" stroke-width="1" stroke-dasharray="3 3"/>
<line x1="801.5" y1="183" x2="801.5" y2="533" stroke="#9a9a9a" stroke-width="1" stroke-dasharray="3 3"/>
<line x1="875.5" y1="183" x2="875.5" y2="533" stroke="#9a9a9a" stroke-width="1" stroke-dasharray="3 3"/>
<line x1="949.5" y1="183" x2="949.5" y2="533" stroke="#9a9a9a" stroke-width="1" stroke-dasharray="3 3"/>
<line x1="571" y1="181.5" x2="987" y2="181.5" stroke="#c0c0c0" stroke-width="1"/>
<line x1="571" y1="533.5" x2="987" y2="533.5" stroke="#c0c0c0" stroke-width="1"/>
<line x1="580.5" y1="181" x2="580.5" y2="543" stroke="#c0c0c0" stroke-width="1"/>
<line x1="986.5" y1="181" x2="986.5" y2="534" stroke="#c0c0c0" stroke-width="1"/>
<line x1="571" y1="216.5" x2="580" y2="216.5" stroke="#c0c0c0" stroke-width="1"/>
<line x1="571" y1="251.5" x2="580" y2="251.5" stroke="#c0c0c0" stroke-width="1"/>
<line x1="571" y1="287.5" x2="580" y2="287.5" stroke="#c0c0c0" stroke-width="1"/>
<line x1="571" y1="322.5" x2="580" y2="322.5" stroke="#c0c0c0" stroke-width="1"/>
<line x1="571" y1="357.5" x2="580" y2="357.5" stroke="#c0c0c0" stroke-width="1"/>
<line x1="571" y1="392.5" x2="580" y2="392.5" stroke="#c0c0c0" stroke-width="1"/>
<line x1="571" y1="427.5" x2="580" y2="427.5" stroke="#c0c0c0" stroke-width="1"/>
<line x1="571" y1="463.5" x2="580" y2="463.5" stroke="#c0c0c0" stroke-width="1"/>
<line x1="571" y1="498.5" x2="580" y2="498.5" stroke="#c0c0c0" stroke-width="1"/>
<line x1="654.5" y1="533" x2="654.5" y2="543" stroke="#c0c0c0" stroke-width="1"/>
<line x1="728.5" y1="533" x2="728.5" y2="543" stroke="#c0c0c0" stroke-width="1"/>
<line x1="801.5" y1="533" x2="801.5" y2="543" stroke="#c0c0c0" stroke-width="1"/>
<line x1="875.5" y1="533" x2="875.5" y2="543" stroke="#c0c0c0" stroke-width="1"/>
<line x1="949.5" y1="533" x2="949.5" y2="543" stroke="#c0c0c0" stroke-width="1"/>
<text x="570" y="187" text-anchor="end" fill="#c8c8c8" font-size="16">-0.88V</text>
<text x="570" y="222" text-anchor="end" fill="#c8c8c8" font-size="16">-0.90V</text>
<text x="570" y="257" text-anchor="end" fill="#c8c8c8" font-size="16">-0.92V</text>
<text x="570" y="293" text-anchor="end" fill="#c8c8c8" font-size="16">-0.94V</text>
<text x="570" y="328" text-anchor="end" fill="#c8c8c8" font-size="16">-0.96V</text>
<text x="570" y="363" text-anchor="end" fill="#c8c8c8" font-size="16">-0.98V</text>
<text x="570" y="398" text-anchor="end" fill="#c8c8c8" font-size="16">-1.00V</text>
<text x="570" y="433" text-anchor="end" fill="#c8c8c8" font-size="16">-1.02V</text>
<text x="570" y="469" text-anchor="end" fill="#c8c8c8" font-size="16">-1.04V</text>
<text x="570" y="504" text-anchor="end" fill="#c8c8c8" font-size="16">-1.06V</text>
<text x="570" y="539" text-anchor="end" fill="#c8c8c8" font-size="16">-1.08V</text>
<text x="580" y="559" text-anchor="middle" fill="#c8c8c8" font-size="16">48.6&#181;s</text>
<text x="654" y="559" text-anchor="middle" fill="#c8c8c8" font-size="16">49.8&#181;s</text>
<text x="728" y="559" text-anchor="middle" fill="#c8c8c8" font-size="16">51.0&#181;s</text>
<text x="801" y="559" text-anchor="middle" fill="#c8c8c8" font-size="16">52.2&#181;s</text>
<text x="875" y="559" text-anchor="middle" fill="#c8c8c8" font-size="16">53.4&#181;s</text>
<text x="949" y="559" text-anchor="middle" fill="#c8c8c8" font-size="16">54.6&#181;s</text>
<text x="647" y="176" text-anchor="middle" fill="#00ff00" font-size="16">V(a)</text>
<text x="783" y="176" text-anchor="middle" fill="#0000ff" font-size="16">V(c)</text>
<text x="916" y="176" text-anchor="middle" fill="#ff0000" font-size="16">V(e)</text>
<g shape-rendering="crispEdges"><polyline points="693.5,181 697.5,251 699.5,283 700.5,287 704.5,322 708.5,357 713.5,368 719.5,381 723.5,384 728.5,387.5 733.5,389.5 737.5,390.5 741.5,391.5 745,392.5 761,392.5" fill="none" stroke="#00ff00" stroke-width="1"/><polyline points="694.5,181 699.5,251 702.5,283 708.5,322 709.5,330 715.5,357 718.5,362 729.5,380 736.5,384 746.5,388.5 753,390.5 761,391.5 761,392.5 784,392.5" fill="none" stroke="#0000ff" stroke-width="1"/><polyline points="696.5,181 700.5,251 703.5,283 707.5,322 715.5,357 718.5,366 724.5,376 729.5,386 733.5,388.5 737.5,390.5 741,392.5 749,392.5 749,393.5 784,393.5 784,392.5 986,392.5" fill="none" stroke="#ff0000" stroke-width="1"/></g>
</svg>
<div id="status" class="abs"><div class="t abs">x = 49.136µs&nbsp;&nbsp;&nbsp;&nbsp;y = -1.0124V</div></div>
</body></html>
